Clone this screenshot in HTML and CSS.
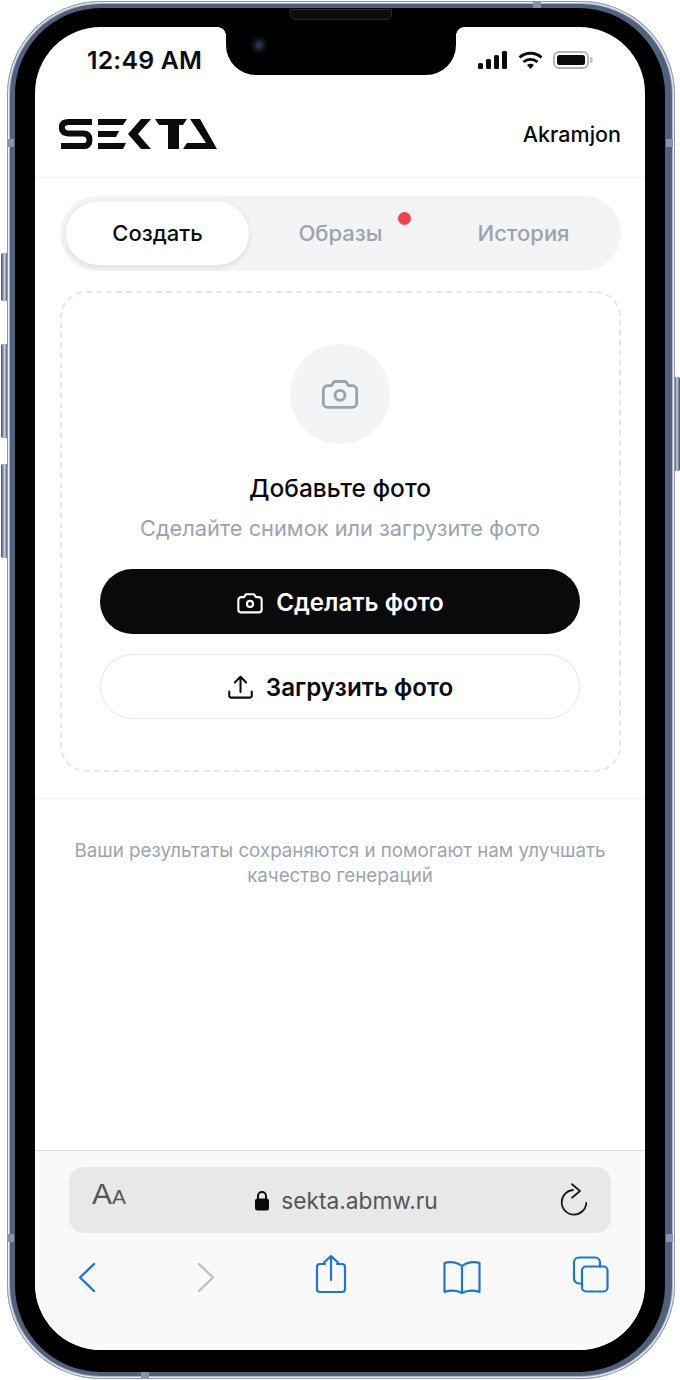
FILE: index.html
```html
<!DOCTYPE html>
<html lang="ru">
<head>
<meta charset="utf-8">
<title>SEKTA</title>
<link rel="stylesheet" href="styles.css">
</head>
<body>
<div class="device">
  <span class="side side-l1"></span>
  <span class="side side-l2"></span>
  <span class="side side-l3"></span>
  <span class="side side-r1"></span>
  <span class="band band-lt"></span>
  <span class="band band-rt"></span>
  <span class="band band-lb"></span>
  <span class="band band-rb"></span>
  <span class="band-h band-top"></span>
  <span class="band-h band-bottom"></span>
  <div class="bezel">
    <span class="speaker"></span>
    <div class="screen">
      <div class="notch"><span class="camera"></span></div>
      <header class="app-head">
        <div class="status">
          <span class="time">12:49 AM</span>
          <div class="status-icons">
            <svg class="signal" width="30" height="18" viewBox="0 0 30 18"><rect x="0" y="12" width="5" height="6" rx="1.500"/><rect x="8" y="8" width="5" height="10" rx="1.500"/><rect x="16" y="4" width="5" height="14" rx="1.500"/><rect x="24" y="0" width="5" height="18" rx="1.500"/></svg>
            <svg class="wifi" width="25" height="18" viewBox="0 0 25 18"><path d="M1.500 6.500C7.500 .8 17.500 .8 23.500 6.500" fill="none" stroke="#0b0b0f" stroke-width="2.800"/><path d="M5.500 11c4-3.600 10-3.600 14 0" fill="none" stroke="#0b0b0f" stroke-width="2.800"/><path d="M9 14c2-1.800 5-1.800 7 0l-3.500 4z" fill="#0b0b0f"/></svg>
            <svg class="battery" width="40" height="18" viewBox="0 0 40 18"><rect x="1" y="1" width="34" height="16" rx="5" fill="none" stroke="#b5b5b5" stroke-width="2"/><rect x="4" y="4" width="28" height="10" rx="2.500" fill="#0b0b0f"/><rect x="37" y="6" width="2.500" height="6" rx="1" fill="#c4c4c4"/></svg>
          </div>
        </div>
        <div class="brand-row">
          <svg class="logo" width="158" height="30" viewBox="0 0 158 30">
            <path d="M33 3H9.500Q2.800 3 2.800 8.500T9.500 14.500H24Q30.500 14.500 30.500 21T24 27H2" fill="none" stroke="#0b0b0f" stroke-width="6"/>
            <polygon points="39,0 68,0 64,6 39,6"/>
            <polygon points="39,12 60,12 57,18 39,18"/>
            <polygon points="39,24 67,24 64,30 39,30"/>
            <polygon points="82,0 92,0 79,15 92,30 82,30 69,15"/>
            <polygon points="96,0 128,0 124,6 120,6 120,30 109,30 109,6 100,6"/>
            <polygon points="131,0 141,0 158,30 124,30 128,24 147,24"/>
          </svg>
          <span class="user">Akramjon</span>
        </div>
      </header>
      <main class="content">
        <nav class="tabs">
          <span class="tab tab-active">Создать</span>
          <span class="tab">Образы<i class="dot"></i></span>
          <span class="tab">История</span>
        </nav>
        <section class="drop">
          <div class="circle">
            <svg width="40" height="40" viewBox="0 0 24 24" fill="none" stroke="#9ca3af" stroke-width="1.700" stroke-linecap="round" stroke-linejoin="round"><path d="M4.500 20h15a2.500 2.500 0 0 0 2.500-2.500V9.500A2.500 2.500 0 0 0 19.500 7h-2.400L15.500 4.500h-7L6.900 7H4.500A2.500 2.500 0 0 0 2 9.500v8A2.500 2.500 0 0 0 4.500 20z"/><circle cx="12" cy="12.800" r="3"/></svg>
          </div>
          <h1 class="title">Добавьте фото</h1>
          <p class="sub">Сделайте снимок или загрузите фото</p>
          <div class="btn btn-dark">
            <svg width="28" height="28" viewBox="0 0 24 24" fill="none" stroke="#fff" stroke-width="1.800" stroke-linecap="round" stroke-linejoin="round"><path d="M4.500 20h15a2.500 2.500 0 0 0 2.500-2.500V9.500A2.500 2.500 0 0 0 19.500 7h-2.400L15.500 4.500h-7L6.900 7H4.500A2.500 2.500 0 0 0 2 9.500v8A2.500 2.500 0 0 0 4.500 20z"/><circle cx="12" cy="12.800" r="2.600"/></svg>
            <span>Сделать фото</span>
          </div>
          <div class="btn btn-light">
            <svg width="27" height="27" viewBox="0 0 24 24" fill="none" stroke="#0b0b0f" stroke-width="1.800" stroke-linecap="round" stroke-linejoin="round"><path d="M2 15.500v3.500a2 2 0 0 0 2 2h16a2 2 0 0 0 2-2v-3.500"/><path d="M12 16V2.500M7 7.500l5-5 5 5"/></svg>
            <span>Загрузить фото</span>
          </div>
        </section>
        <p class="note">Ваши результаты сохраняются и помогают нам улучшать<br>качество генераций</p>
      </main>
      <footer class="safari">
        <div class="url-bar">
          <span class="aa">A<small>A</small></span>
          <span class="url">
            <svg width="14" height="21" viewBox="0 0 14 21"><path d="M3 9V6a4 4 0 0 1 8 0v3" fill="none" stroke="#0b0b0f" stroke-width="2"/><rect x="0" y="8.500" width="14" height="12" rx="2.500" fill="#0b0b0f"/></svg>
            <span>sekta.abmw.ru</span>
          </span>
          <svg class="reload" width="28" height="36" viewBox="0 0 28 36" fill="none" stroke="#1a1a1a" stroke-width="1.800" stroke-linecap="round" stroke-linejoin="round"><path d="M14 10A12.300 12.300 0 1 0 27.300 23"/><path d="M13 4.300L21 11L13 17.700"/></svg>
        </div>
        <div class="toolbar">
          <svg width="60" height="40" viewBox="0 0 60 40" fill="none" stroke="#1e76d2" stroke-width="2.400" stroke-linecap="round" stroke-linejoin="round"><path d="M37 9L23 22.500 37 36"/></svg>
          <svg width="60" height="40" viewBox="0 0 60 40" fill="none" stroke="#c0c0c2" stroke-width="2.400" stroke-linecap="round" stroke-linejoin="round"><path d="M23 9L37 22.500 23 36"/></svg>
          <svg width="60" height="40" viewBox="0 0 60 40" fill="none" stroke="#1e76d2" stroke-width="2.200" stroke-linecap="round" stroke-linejoin="round"><path d="M24 9h-5a3 3 0 0 0-3 3v22a3 3 0 0 0 3 3h22a3 3 0 0 0 3-3V12a3 3 0 0 0-3-3h-5"/><path d="M30 25V1M23 7.500L30 1l7 6.500"/></svg>
          <svg width="60" height="40" viewBox="0 0 60 40" fill="none" stroke="#1e76d2" stroke-width="2.200" stroke-linecap="round" stroke-linejoin="round"><path d="M30 11C26 7.500 18 6 12.500 8v29c6-2 13-1.500 17.500 1 4.500-2.500 11.500-3 17.500-1V8C42 6 34 7.500 30 11zM30 11v27"/></svg>
          <svg width="60" height="40" viewBox="0 0 60 40" fill="none" stroke="#1e76d2" stroke-width="2.200" stroke-linecap="round" stroke-linejoin="round"><rect x="21" y="11.500" width="25.500" height="25" rx="4"/><path d="M21 28.500h-3a5 5 0 0 1-5-5V7.500a5 5 0 0 1 5-5h16a5 5 0 0 1 5 5v4"/></svg>
        </div>
      </footer>
    </div>
  </div>
</div>
</body>
</html>
```
FILE: styles.css
```css
* { box-sizing: border-box; }
html, body { margin: 0; padding: 0; background: #fff; }
body { width: 680px; height: 1380px; overflow: hidden; font-family: Inter, "Liberation Sans", sans-serif; color: #0b0b0f; }

.device {
  position: relative;
  width: 668px;
  height: 1378px;
  margin: 1px 0 0 7px;
  padding: 7px 10px 7px 8px;
  border-radius: 94px;
  background: #4f617d;
  box-shadow: inset 0 0 0 1px #8d97a6, inset 0 0 0 2px #eef1f5, inset 0 0 0 3px #a9b5c6;
}
.bezel {
  position: relative;
  height: 100%;
  padding: 19px 20px 22px 20px;
  background: #000;
  border-radius: 86px;
}
.screen {
  position: relative;
  height: 100%;
  display: flex;
  flex-direction: column;
  background: #fff;
  border-radius: 66px;
  overflow: hidden;
}
.side { position: absolute; left: -6px; width: 6px; background: linear-gradient(90deg, #3f4c60, #c6d0de 60%, #59677c); border-radius: 2px 0 0 2px; }
.side-l1 { top: 252px; height: 48px; }
.side-l2 { top: 343px; height: 94px; }
.side-l3 { top: 463px; height: 94px; }
.side-r1 { left: auto; right: -5px; top: 376px; height: 94px; width: 5px; transform: scaleX(-1); }
.band { position: absolute; width: 7px; height: 8px; background: #8494ad; }
.band-lt { left: 0; top: 138px; }
.band-rt { right: 2px; top: 138px; }
.band-lb { left: 0; top: 1233px; }
.band-rb { right: 2px; top: 1233px; }
.band-h { position: absolute; width: 8px; height: 7px; background: #8494ad; }
.band-top { left: 526px; top: 0; }
.band-bottom { left: 134px; bottom: 0; }

.speaker { position: absolute; left: 275px; top: 1px; width: 102px; height: 11px; background: #0c0c0c; border: 1px solid #2a2a2a; border-radius: 0 0 6px 6px; }
.notch { position: absolute; left: 191px; top: 0; width: 230px; height: 48px; background: #000; border-radius: 0 0 30px 30px; z-index: 2; }
.notch::before, .notch::after { content: ""; position: absolute; top: 0; width: 8px; height: 8px; }
.notch::before { left: -8px; background: radial-gradient(circle at 0 100%, #fff 7.500px, #000 8px); }
.notch::after { right: -8px; background: radial-gradient(circle at 100% 100%, #fff 7.500px, #000 8px); }
.camera { position: absolute; left: 24px; top: 9px; width: 18px; height: 18px; border-radius: 50%; background: radial-gradient(circle, #24344f 0 2.500px, #10151d 5px, #050505 9px); }

.app-head { border-bottom: 1px solid #f3f4f6; height: 151px; flex: none; }
.status { display: flex; justify-content: space-between; align-items: center; padding: 20px 52px 0 52px; height: 46px; }
.time { font-size: 24.800px; font-weight: 600; letter-spacing: 0.2px; }
.status-icons { display: flex; align-items: center; gap: 10px; }
.signal { fill: #0b0b0f; }
.brand-row { display: flex; justify-content: space-between; align-items: center; padding: 46px 24px 0 24px; }
.logo { fill: #0b0b0f; }
.user { font-size: 21.500px; font-weight: 500; }

.content { flex: 1; padding: 0; }
.tabs { position: relative; display: grid; grid-template-columns: 1fr 1fr 1fr; gap: 0; align-items: center; margin: 18px 24px 0 25px; height: 75px; padding: 6px; background: #f3f4f6; border-radius: 38px; }
.tab { position: relative; height: 63px; padding-bottom: 2px; display: flex; align-items: center; justify-content: center; font-size: 22px; font-weight: 500; color: #9ca3af; border-radius: 32px; }
.tab-active { color: #0b0b0f; background: #fff; box-shadow: 0 2px 6px rgba(0,0,0,0.1); }
.dot { position: absolute; left: 149px; top: 10px; width: 13px; height: 13px; border-radius: 50%; background: #ef4450; }

.drop { margin: 20px 24px 0 25px; height: 481px; padding: 51px 39px 0 38px; border: 2px dashed #e5e7eb; border-radius: 26px; display: flex; flex-direction: column; align-items: center; }
.circle { width: 100px; height: 100px; flex: none; border-radius: 50%; background: #f3f4f6; display: flex; align-items: center; justify-content: center; }
.title { margin: 28px 0 0 0; font-size: 24.500px; line-height: 32px; font-weight: 500; }
.sub { margin: 9px 0 0 0; font-size: 21.800px; line-height: 30px; color: #9ca3af; }
.btn { width: 100%; height: 65px; flex: none; padding-top: 2px; display: flex; align-items: center; justify-content: center; gap: 12px; font-size: 24.200px; font-weight: 600; border-radius: 33px; }
.btn-dark { margin-top: 26px; background: #0a0a0c; color: #fff; }
.btn-light { margin-top: 20px; background: #fff; color: #0b0b0f; border: 1.500px solid #e5e7eb; }

.note { margin: 26px 0 0 0; padding: 39px 0 0 0; border-top: 1px solid #f3f4f6; text-align: center; font-size: 18.750px; line-height: 25px; color: #9ca3af; }

.safari { flex: none; height: 200px; background: #f9f9f9; border-top: 1.500px solid #dcdcdc; padding: 16px 34px 0 34px; }
.url-bar { height: 66px; display: flex; align-items: center; justify-content: space-between; padding: 0 24px 0 23px; background: #e8e8e8; border-radius: 15px; }
.aa { align-self: flex-start; margin-top: 9px; font-family: "Liberation Sans", sans-serif; font-size: 30px; line-height: 36px; color: #555; }
.aa small { font-size: 21px; }
.url { display: inline-flex; align-items: center; gap: 12px; font-size: 22.700px; color: #555; margin-left: 8px; }
.reload { margin-top: -5px; }
.toolbar { display: grid; grid-template-columns: 119px 125px 131px 129px 60px; padding: 22px 0 0 22px; margin: 0 -34px; }
.toolbar svg { overflow: visible; }
```
